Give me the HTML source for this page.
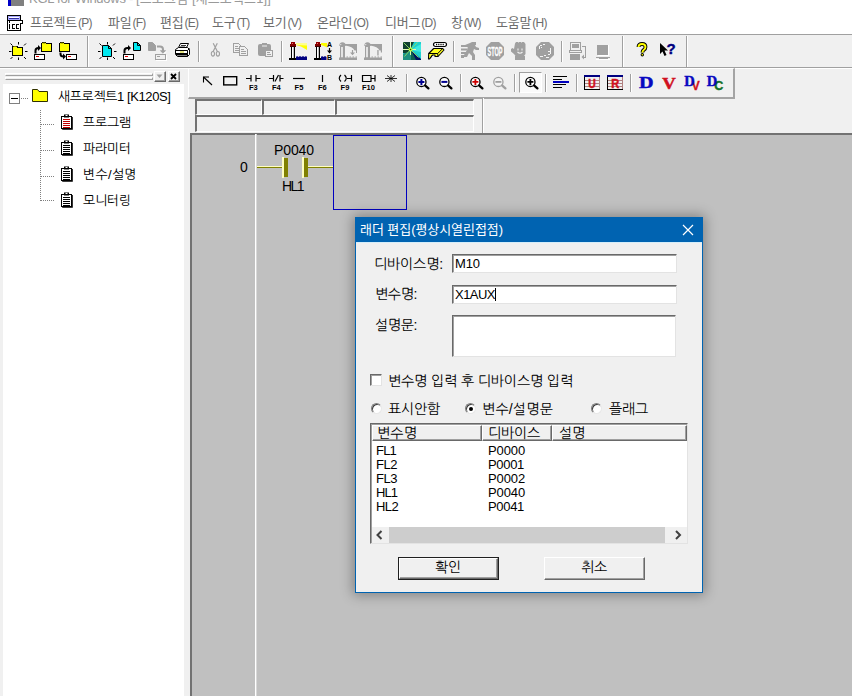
<!DOCTYPE html>
<html lang="ko">
<head>
<meta charset="utf-8">
<title>KGL for Windows</title>
<style>
*{box-sizing:border-box;margin:0;padding:0}
html,body{width:852px;height:696px;overflow:hidden;background:#f0f0f0}
body{font-family:"Liberation Sans","NanumGothic",sans-serif;font-size:12px;color:#000;position:relative}
#app{position:absolute;left:0;top:0;width:852px;height:696px;overflow:hidden;background:#f0f0f0}
.abs{position:absolute}
.t{position:absolute;white-space:nowrap;line-height:14px;height:14px}
svg{position:absolute;overflow:visible}
/* title + menu */
#titlebar{left:0;top:0;width:852px;height:8px;background:#fff;overflow:hidden}
#menubar{left:0;top:8px;width:852px;height:26px;background:#fff}
#menubar .t{color:#6d6d6d;top:6px;font-family:"Liberation Sans","Noto Sans CJK KR",sans-serif;font-size:13px;line-height:18px;height:18px;letter-spacing:-.2px}
#menubar .t span{font-size:12px;letter-spacing:-.75px;margin-left:1px}
#menuline{left:0;top:34px;width:852px;height:1px;background:#a0a0a0}
/* toolbars */
.vsep{position:absolute;width:2px;border-left:1px solid #a0a0a0;border-right:1px solid #fff}
/* left panel */
#leftpanel{left:0;top:69px;width:187px;height:627px;background:#f0f0f0}
#tree{left:0;top:84px;width:184px;height:612px;background:#fff}
/* mdi */
#mdi{left:190px;top:133px;width:662px;height:563px;background:#c0c0c0;border-left:2px solid #727272;border-top:2px solid #727272}
.ib{border-style:solid;border-width:2px 1px 1px 2px;border-color:#727272 #fff #fff #727272;background:#f0f0f0}
.lad{font-size:14px;line-height:16px;height:16px}
/* dialog */
#dlg{left:355px;top:217px;width:348px;height:376px;background:#f0f0f0;border:1px solid #0063b1;box-shadow:0 0 12px 2px rgba(0,0,0,.33)}
#dlgtitle{left:0;top:0;width:346px;height:25px;background:#0063b1;border-bottom:1px solid #d5eefa}
.sunk{position:absolute;background:#fff;border:1px solid;border-color:#696969 #e3e3e3 #e3e3e3 #696969;box-shadow:inset 1px 1px 0 #a0a0a0}
.btn{position:absolute;background:#f0f0f0;border:1px solid;border-color:#fff #696969 #696969 #fff;box-shadow:inset -1px -1px 0 #a0a0a0}
.radio{position:absolute;width:11px;height:11px;margin-top:1px;border-radius:50%;background:#fff;border:1px solid;border-color:#808080 #e8e8e8 #e8e8e8 #808080;box-shadow:inset 1px 1px 0 #404040}
.radio i{position:absolute;left:2.5px;top:2.5px;width:4px;height:4px;border-radius:50%;background:#000}
.hdr{position:absolute;height:16px;background:#f0f0f0;border:1px solid;border-color:#fff #696969 #696969 #fff;box-shadow:inset -1px -1px 0 #a0a0a0}
.k{font-size:14px;line-height:16px;height:16px;margin-top:-1px}
.l{font-size:13px}
.tr{font-size:13px;line-height:16px;height:16px;margin-top:-1px}
.ttl{top:-10px;font-size:13px;line-height:18px;height:18px;color:#9a9a9a;font-family:"Liberation Sans","Noto Sans CJK KR",sans-serif}
</style>
</head>
<body>
<div id="app">
  <div id="titlebar" class="abs">
    <div class="abs" style="left:8px;top:-10px;width:16px;height:16px;background:#808080;border-left:3px solid #0000c8"></div>
    <div class="t ttl" style="left:29px;letter-spacing:-0.27px">KGL for Windows -</div>
    <div class="t ttl" style="left:136px;letter-spacing:0.14px">[프로그램 [새프로젝트1]]</div>
  </div>
  <div id="menubar" class="abs">
    <svg style="left:7px;top:7px" width="16" height="16" viewBox="0 0 16 16" shape-rendering="crispEdges">
      <rect x="0" y="0" width="14" height="16" fill="#000"/>
      <rect x="1" y="1" width="12" height="4" fill="#a8a8ff"/><rect x="2" y="2" width="10" height="1" fill="#fff"/><rect x="2" y="3" width="10" height="1" fill="#3030a0"/>
      <rect x="2" y="5" width="14" height="4" fill="#000"/><rect x="3" y="6" width="12" height="2" fill="#fff"/>
      <rect x="1" y="8" width="12" height="7" fill="#fff"/><rect x="1" y="6" width="1" height="3" fill="#fff"/>
      <path d="M2.500 9v5M5 9.500h3M5.500 9v4M5 13.500h3M9 9.500h3M9.500 9v4M9 13.500h3" stroke="#000" fill="none"/>
    </svg>
    <div class="t m" style="left:30px">프로젝트<span>(P)</span></div>
    <div class="t m" style="left:108px">파일<span>(F)</span></div>
    <div class="t m" style="left:160px">편집<span>(E)</span></div>
    <div class="t m" style="left:212px">도구<span>(T)</span></div>
    <div class="t m" style="left:263px">보기<span>(V)</span></div>
    <div class="t m" style="left:317px">온라인<span>(O)</span></div>
    <div class="t m" style="left:385px">디버그<span>(D)</span></div>
    <div class="t m" style="left:451px">창<span>(W)</span></div>
    <div class="t m" style="left:496px">도움말<span>(H)</span></div>
  </div>
  <div id="menuline" class="abs"></div>
  <div class="abs" id="tb1" style="left:0;top:35px;width:852px;height:32px;background:#f0f0f0"></div>
  <div class="abs" style="left:0;top:67px;width:852px;height:1px;background:#a0a0a0"></div>
  <div class="abs" style="left:0;top:68px;width:852px;height:1px;background:#fff"></div>
  <div class="vsep" style="left:87px;top:36px;height:31px"></div>
  <div class="vsep" style="left:198px;top:41px;height:21px"></div>
  <div class="vsep" style="left:281px;top:41px;height:21px"></div>
  <div class="vsep" style="left:392px;top:36px;height:31px"></div>
  <div class="vsep" style="left:453px;top:41px;height:21px"></div>
  <div class="vsep" style="left:561px;top:41px;height:21px"></div>
  <div class="vsep" style="left:622px;top:36px;height:31px"></div>
  <div class="vsep" style="left:686px;top:36px;height:31px"></div>
  <svg id="tb1ico" style="left:0;top:0" width="852" height="70" viewBox="0 0 852 70">
    <defs>
      <g id="rays" stroke="#000" stroke-width="1" fill="none"><path d="M9.5 0v2.5M9.5 15.5v2.5M0 9.5h2.5M16 9.5h2.5M1.5 1.5l2 2M17 1.5l-2 2M1.5 17l2-2M17 17l-2-2"/></g>
      <g id="folder"><path d="M0.5 9.5v-8l1-1h3l1 1h5v8z" fill="#ff0" stroke="#000" shape-rendering="crispEdges"/><path d="M1.5 1h3" stroke="#808000" /></g>
      <g id="pbox" shape-rendering="crispEdges"><rect x="0.5" y="0.5" width="10" height="5" fill="#fff" stroke="#000"/><rect x="2" y="2" width="3" height="1" fill="#e00000"/></g>
    </defs>
    <!-- 1 new project -->
    <g transform="translate(9,42)"><use href="#rays"/><g transform="translate(3,3.5)"><use href="#folder"/></g></g>
    <!-- 2 open project -->
    <g transform="translate(34,42)"><g transform="translate(7,0)"><use href="#folder"/></g>
      <path d="M1.5 11.5v-3q0-2.5 3-2.5" fill="none" stroke="#000" stroke-width="2"/><path d="M4 3l3 3-3 3z" fill="#000"/>
      <g transform="translate(0,12)"><use href="#pbox"/></g></g>
    <!-- 3 save project -->
    <g transform="translate(59,42)"><use href="#folder"/>
      <path d="M1.5 10.5v1.5q0 2.5 3 2.5" fill="none" stroke="#000" stroke-width="2"/><path d="M4 11.5l3 3-3 3z" fill="#000"/>
      <g transform="translate(7,12)"><use href="#pbox"/></g></g>
    <!-- 4 new file -->
    <g transform="translate(98,42)"><use href="#rays"/><path d="M4.5 3.5h6l3 3v8h-9z" fill="#00e8f0" stroke="#000"/><path d="M10.5 3.5v3h3" fill="none" stroke="#000"/></g>
    <!-- 5 open file -->
    <g transform="translate(123,42)"><path d="M10.5 0.5h4l3 3v5h-7z" fill="#00e8f0" stroke="#000"/><path d="M14.5 0.5v3h3" fill="none" stroke="#000"/>
      <path d="M1.5 11.5v-3q0-2.500 3-2.500h1" fill="none" stroke="#000" stroke-width="2"/><path d="M5 3l3 3-3 3z" fill="#000"/>
      <g transform="translate(0,12)"><use href="#pbox"/></g></g>
    <!-- 6 save file (disabled) -->
    <g transform="translate(148,42)"><path d="M0.500 0.500h4l3 3v5h-7z" fill="#a0a0a0" stroke="#a0a0a0"/>
      <path d="M9 4.500h3q3 0 3 3v2" fill="none" stroke="#a0a0a0" stroke-width="2"/><path d="M12 8.500h6l-3 3z" fill="#a0a0a0"/><path d="M13 9.500h6l-3 3z" fill="#fff" opacity=".8" transform="translate(0,0)"/><path d="M12 8.500h6l-3 3z" fill="#a0a0a0"/>
      <rect x="8.500" y="13.500" width="10" height="5" fill="none" stroke="#fff" shape-rendering="crispEdges"/><rect x="7.500" y="12.500" width="10" height="5" fill="#f0f0f0" stroke="#a0a0a0" shape-rendering="crispEdges"/><rect x="9" y="14" width="3" height="1" fill="#a0a0a0"/></g>
    <!-- 7 printer -->
    <g transform="translate(174,43)"><path d="M4.500 4.500l2-4h8l-2 4" fill="#fff" stroke="#000"/><path d="M7 2.500h5M6 4h5" stroke="#000" stroke-width=".8"/>
      <path d="M1.500 6.500l3-2h9l2 2v5l-2 2h-10l-2-2z" fill="#fff" stroke="#000"/><path d="M1.500 7.500h12l2-2M13.500 7.500v6" fill="none" stroke="#000"/><rect x="2" y="10" width="11" height="2.500" fill="#000"/><rect x="6" y="8.500" width="4" height="1" fill="#c8c800"/></g>
    <!-- 8 cut (disabled) -->
    <g transform="translate(211,43)" fill="none" stroke="#a0a0a0"><path d="M2.200 0.300l4.300 8.500M6.300 0.300l-4.300 8.500" stroke-width="1.200"/><ellipse cx="1.900" cy="10.800" rx="1.600" ry="2.300" stroke-width="1.100"/><ellipse cx="6.900" cy="10.800" rx="1.600" ry="2.300" stroke-width="1.100"/></g>
    <!-- 9 copy (disabled) -->
    <g transform="translate(233,43)" shape-rendering="crispEdges"><path d="M0.500 0.500h5l3 3v6h-8z" fill="#f0f0f0" stroke="#a0a0a0"/><path d="M2 3.500h3M2 5.500h5M2 7.500h5" stroke="#a0a0a0"/>
      <path d="M6.500 3.500h5l3 3v6h-8z" fill="#f0f0f0" stroke="#a0a0a0"/><path d="M8 6.500h3M8 8.500h5M8 10.500h5" stroke="#a0a0a0"/></g>
    <!-- 10 paste (disabled) -->
    <g transform="translate(258,43)"><rect x="0" y="1" width="13" height="12" rx="2" fill="#a0a0a0"/><rect x="4" y="0" width="5" height="2" fill="#a0a0a0"/><rect x="4" y="2.500" width="5" height="1" fill="#f0f0f0"/>
      <rect x="7.500" y="7.500" width="7" height="6" fill="#f0f0f0" stroke="#a0a0a0" shape-rendering="crispEdges"/><path d="M9 9.500h3M9 11.500h4" stroke="#a0a0a0" shape-rendering="crispEdges"/></g>
    <defs>
      <g id="lh" shape-rendering="crispEdges"><rect x="2" y="4" width="4" height="12" fill="#000"/><rect x="3" y="4" width="1" height="12" fill="#fff"/><rect x="4" y="4" width="1" height="12" fill="#c0c0c0"/><rect x="1" y="2" width="6" height="2" fill="#800000"/><rect x="2" y="0" width="4" height="2" fill="#900000"/><rect x="3" y="1" width="1" height="1" fill="#ff6060"/><rect x="1" y="3.500" width="6" height="1" fill="#400000"/><rect x="0" y="16" width="7" height="2" fill="#000"/></g>
      <g id="lhg"><path d="M0.300 4q0-3.700 3.200-3.700t3.200 3.700z" fill="#a0a0a0"/><rect x="1" y="3.500" width="5" height="13" fill="#a0a0a0"/><rect x="2.200" y="5" width="1.600" height="10.500" fill="#f4f4f4"/><circle cx="1.800" cy="2.600" r=".6" fill="#f4f4f4"/>
        <path d="M6 2h12v6.500h-2.500q-1.500-4-9.500-5z" fill="#a0a0a0"/><rect x="0" y="15.500" width="18" height="2.500" fill="#a0a0a0"/><path d="M7.500 14.500h1.500v1h-1.500zM10.500 14.500h1.500v1h-1.500zM13.500 14.500h1.500v1h-1.500zM16.500 14.500h1.500v1h-1.500z" fill="#a0a0a0"/></g>
    </defs>
    <!-- 11 lighthouse find -->
    <g transform="translate(289,42)"><path d="M7 1h11v7l-6-3.500l-5-1.500z" fill="#ff0"/><path d="M7 1h11v2.500l-11-.500z" fill="#ffff90"/><path d="M7 18v-3l1-1 1.500 1 1.500-1 1.500 1 1.500-1 1.500 1 1.500-1 1 1v3z" fill="#000080"/><use href="#lh"/></g>
    <!-- 12 lighthouse replace -->
    <g transform="translate(314,42)"><path d="M7 1h6v4.500l-2-1l-4-1.500z" fill="#ff0"/><path d="M7 18v-3l1-1 1.500 1 1.500-1 1.500 1v3z" fill="#000080"/><use href="#lh"/>
      <text x="13" y="5.300" font-family="Liberation Sans,sans-serif" font-weight="bold" font-size="7" fill="#000">A</text><text x="13" y="18" font-family="Liberation Sans,sans-serif" font-weight="bold" font-size="7" fill="#000">B</text><path d="M15.500 6v4" stroke="#000" stroke-width="1.200"/><path d="M13 8.500h5l-2.500 3z" fill="#000"/></g>
    <!-- 13, 14 lighthouse disabled -->
    <g transform="translate(339,42)"><use href="#lhg"/><path d="M13.500 8v3" stroke="#a0a0a0" stroke-width="1.200"/><path d="M11 10.500h5l-2.500 2.800z" fill="#a0a0a0"/><rect x="17" y="8" width="1" height="3" fill="#a0a0a0"/></g>
    <g transform="translate(364,42)"><use href="#lhg"/><rect x="13.300" y="8" width="1.300" height="5.500" fill="#a0a0a0"/><rect x="16.800" y="8" width="1.200" height="2.500" fill="#a0a0a0"/></g>
    <!-- 15 star -->
    <g transform="translate(402,42)"><rect x="1" y="0" width="18" height="18" fill="#20d0d0"/><path d="M1 0h11l-3.500 7h-7.500zM1 8h7l-2 4-5-1z" fill="#104030"/><path d="M1 12l7-3 2 9h-9z" fill="#209080"/><path d="M9 8l10-6v8z" fill="#40e8e0"/><path d="M9 8l10 9v1h-6z" fill="#001060"/><path d="M9 8l5 10h-5z" fill="#106050"/>
      <path d="M8.500 7.500l-7-7M8.500 7.500l7-7M8.500 7.500l8 8M8.500 7.500l-6 7" stroke="#90e060" stroke-width=".9"/><path d="M8.500 0v13M1 7.500h13" stroke="#e0ffb0" stroke-width="1"/><circle cx="8.500" cy="7.500" r="2" fill="#c0ff40"/><circle cx="8.500" cy="7.500" r=".8" fill="#204000"/></g>
    <!-- 16 connector -->
    <g transform="translate(428,42)"><rect x="5.500" y="0.500" width="13" height="4" rx="2" fill="#fff" stroke="#000" stroke-width="1.200"/><path d="M8 2.500h8.500" stroke="#000" stroke-width="1.300" stroke-dasharray="1.200 1"/>
      <path d="M0.700 11.500l5-5h9l1.300 1.500-6 6.500h-3v-1.500h-2.500l-3 4h-1z" fill="#ffff20" stroke="#000" stroke-linejoin="round" stroke-width="1.100"/><path d="M0.700 11.500h9l5-5M9.700 11.500l.3 3M4.500 13l-2.500 3.500" fill="none" stroke="#000" stroke-width="1"/></g>
    <!-- 17 run (disabled) -->
    <g transform="translate(461,42)" fill="#a0a0a0"><rect x="0" y="3" width="7" height="2"/><rect x="0" y="6.500" width="6" height="2"/><rect x="0" y="10" width="5" height="2"/><rect x="0" y="13" width="3" height="3"/>
      <path d="M11 0h4v3h-1l1 2 3 1v2h-3l-2-1-1 3 2 3v5h-3v-4l-3-3-2 4h-3v-2l3-5 1-4-3 1v-2l5-2z"/></g>
    <!-- 18 stop (disabled) -->
    <g transform="translate(486,42)"><path d="M5 0h8l5 5v8l-5 5h-8l-5-5v-8z" fill="#a0a0a0"/><text x="9" y="13.800" text-anchor="middle" font-family="Liberation Sans,sans-serif" font-weight="bold" font-size="13" fill="#fff" stroke="#fff" stroke-width=".3" textLength="15" lengthAdjust="spacingAndGlyphs">STOP</text></g>
    <!-- 19 hand (disabled) -->
    <g transform="translate(511,42)" fill="#a0a0a0"><path d="M4 1.500l1-1.500h2l.5 1 .5-1h2l.5 1 .5-1h2l1.500 2v10l-1.500 2h-8.500l-1.500-2l-3-2.500v-2.500l1.500-1 1.500 1z"/><rect x="4" y="14" width="10" height="4"/><path d="M7 6.500v2M11 6.500v2M6.500 10q2.500 2.500 5 0" stroke="#f0f0f0" fill="none" stroke-width="1.100"/></g>
    <!-- 20 globe (disabled) -->
    <g transform="translate(536,42)"><path d="M5 0h8l5 5v8l-5 5h-8l-5-5v-8z" fill="#a0a0a0"/><g fill="#f4f4f4" shape-rendering="crispEdges"><rect x="4" y="3" width="2" height="1"/><rect x="3" y="4" width="1" height="3"/><rect x="7" y="2" width="2" height="1"/><rect x="5" y="5" width="1" height="1"/><rect x="14" y="6" width="1" height="6"/><rect x="12" y="9" width="2" height="1"/><rect x="12" y="12" width="2" height="1"/><rect x="4" y="14" width="3" height="1"/><rect x="8" y="13" width="2" height="1"/><rect x="10" y="15" width="3" height="1"/></g></g>
    <!-- 21 pc transfer (disabled) -->
    <g transform="translate(569,42)" shape-rendering="crispEdges"><rect x="1.500" y="0.500" width="10" height="8" fill="#f0f0f0" stroke="#a0a0a0"/><rect x="3" y="2" width="7" height="4" fill="#a0a0a0"/><rect x="0.500" y="8.500" width="12" height="2" fill="#f0f0f0" stroke="#a0a0a0"/><rect x="1" y="12" width="10" height="6" fill="#a0a0a0"/>
      <path d="M13 4.500h3.500v10.500h-3" fill="none" stroke="#a0a0a0"/><path d="M15 12.500v5l-2.500-2.500z" fill="#a0a0a0" shape-rendering="auto"/></g>
    <!-- 22 pc (disabled) -->
    <g transform="translate(596,45)" shape-rendering="crispEdges"><rect x="1" y="0" width="11" height="10" fill="#a0a0a0"/><path d="M12.500 0v10.500h-11" fill="none" stroke="#fff"/><rect x="0" y="11.500" width="14" height="1" fill="#a0a0a0"/><rect x="3" y="12.500" width="9" height="2" fill="#a0a0a0"/><path d="M0 14.500h14" stroke="#fff"/></g>
    <!-- 23 help -->
    <g transform="translate(637,43)"><path d="M1.500 4q0-3 3.500-3t3.500 3q0 2-2 3.200-1 .6-1 2.300" fill="none" stroke="#000" stroke-width="3.800"/><path d="M1.500 4q0-3 3.500-3t3.500 3q0 2-2 3.200-1 .6-1 2.300" fill="none" stroke="#ff0" stroke-width="1.900"/><circle cx="5.300" cy="11.800" r="1.700" fill="#000"/><circle cx="5.300" cy="11.800" r=".8" fill="#ff0"/></g>
    <!-- 24 context help -->
    <g transform="translate(660,43)"><path d="M0 0v11l2.500-2.500l2 4.500l2-1l-2-4.500h3.500z" fill="#000"/><text x="6.500" y="11" font-family="Liberation Sans,sans-serif" font-weight="bold" font-size="15" fill="#000080" stroke="#000080" stroke-width=".4">?</text></g>
  </svg>
  <!-- toolbar 2 -->
  <div class="abs" style="left:188px;top:68px;width:547px;height:31px;background:#f0f0f0;border-style:solid;border-width:1px 2px 2px 1px;border-color:#fff #a4a4a4 #a4a4a4 #fff"></div>
  <div class="vsep" style="left:406px;top:74px;height:18px"></div>
  <div class="vsep" style="left:460px;top:74px;height:18px"></div>
  <div class="vsep" style="left:514px;top:74px;height:18px"></div>
  <div class="vsep" style="left:545px;top:74px;height:18px"></div>
  <div class="vsep" style="left:576px;top:74px;height:18px"></div>
  <div class="vsep" style="left:630px;top:74px;height:18px"></div>
  <div class="abs" style="left:519px;top:72px;width:23px;height:21px;background:#fafafa;border:1px solid;border-color:#a0a0a0 #fff #fff #a0a0a0"></div>
  <svg id="tb2ico" style="left:0;top:0" width="852" height="100" viewBox="0 0 852 100">
    <defs>
      <g id="mag"><circle cx="5.400" cy="4.900" r="4.600" fill="#fff" stroke="#000" stroke-width="1.300"/><path d="M9 8.400l3.400 3" stroke="#000" stroke-width="2.300" stroke-linecap="round"/></g>
      <g id="magg"><circle cx="5.400" cy="4.900" r="4.600" fill="#f4f4f4" stroke="#a0a0a0" stroke-width="1.300"/><path d="M9 8.400l3.400 3" stroke="#a0a0a0" stroke-width="2.300" stroke-linecap="round"/></g>
    </defs>
    <g font-family="Liberation Sans,sans-serif" font-weight="bold" font-size="7.500" fill="#000" text-anchor="middle">
      <!-- arrow -->
      <path d="M203.500 77l8.500 8" stroke="#000" stroke-width="1.100" fill="none"/><path d="M203.500 82.500v-5.500h5.500" stroke="#000" stroke-width="1.100" fill="none"/>
      <!-- rect -->
      <rect x="223.700" y="76.700" width="13" height="8.200" fill="none" stroke="#000" stroke-width="1.400"/>
      <!-- F3 -->
      <path d="M246 78.500h5M256 78.500h4.500M251 75v6.500M256 75v6.500" stroke="#000" stroke-width="1.200" fill="none"/><text x="253.300" y="90">F3</text>
      <!-- F4 -->
      <path d="M269 78.500h4.500M280 78.500h3.500M273.500 75v6.500M280 75v6.500M275 81.500l3.500-6.500" stroke="#000" stroke-width="1.200" fill="none"/><text x="276.300" y="90">F4</text>
      <!-- F5 -->
      <path d="M293 78.500h12" stroke="#000" stroke-width="1.200"/><text x="299" y="90">F5</text>
      <!-- F6 -->
      <path d="M322.500 75v7" stroke="#000" stroke-width="1.200"/><text x="322.300" y="90">F6</text>
      <!-- F9 -->
      <path d="M341 75q-3.500 3.200 0 6.500M344.500 75q3.500 3.200 0 6.500M347 78.500h4.500M351.500 75v6.500" stroke="#000" stroke-width="1.200" fill="none"/><text x="345" y="90">F9</text>
      <!-- F10 -->
      <path d="M362.500 75.500h8.500v6h-8.500zM371 78.500h4M375 75v6.500" stroke="#000" stroke-width="1.200" fill="none"/><text x="368.500" y="90">F10</text>
      <!-- asterisk -->
      <path d="M385 78.500h12M391 75v7M387 75.500l8 6M395 75.500l-8 6" stroke="#000" stroke-width=".800" fill="none"/>
    </g>
    <!-- zoom in -->
    <g transform="translate(416,77)"><use href="#mag"/><path d="M2.400 4.900h6M5.400 1.900v6" stroke="#000090" stroke-width="2"/></g>
    <g transform="translate(439,77)"><use href="#mag"/><path d="M2.400 4.900h6" stroke="#000090" stroke-width="2"/></g>
    <g transform="translate(470,77)"><use href="#mag"/><path d="M2.400 4.900h6M5.400 1.900v6" stroke="#d00000" stroke-width="1.800"/></g>
    <g transform="translate(493,77)"><use href="#magg"/><path d="M2.400 4.900h6" stroke="#a0a0a0" stroke-width="1.800"/></g>
    <g transform="translate(525,77)"><use href="#mag"/><path d="M2.400 4.900h6M5.400 1.900v6" stroke="#000" stroke-width="1.800"/></g>
    <!-- lines -->
    <g shape-rendering="crispEdges"><rect x="553" y="76" width="14" height="1" fill="#000"/><rect x="553" y="79" width="9" height="1" fill="#000"/><rect x="553" y="81" width="16" height="2" fill="#0000c0"/><rect x="553" y="84" width="13" height="1" fill="#000"/><rect x="553" y="87" width="9" height="1" fill="#000"/></g>
    <!-- U / R -->
    <g shape-rendering="crispEdges"><rect x="584" y="75" width="16" height="2" fill="#000080"/><path d="M584.500 77v12.500h15v-12.500M584 80.500h16M584 83.500h16M584 86.500h16" fill="none" stroke="#b08080"/><path d="M584.500 77v12.500h15.500" fill="none" stroke="#000"/>
      <rect x="607" y="75" width="16" height="2" fill="#000080"/><path d="M607.500 77v12.500h15v-12.500M607 80.500h16M607 83.500h16M607 86.500h16" fill="none" stroke="#b08080"/><path d="M607.500 77v12.500h15.500" fill="none" stroke="#000"/></g>
    <g font-family="Liberation Sans,sans-serif" font-weight="bold" text-anchor="middle">
      <text x="592" y="87.700" font-size="12" fill="#d01020" stroke="#d01020" stroke-width=".5" textLength="7.500" lengthAdjust="spacingAndGlyphs">U</text>
      <text x="615.200" y="87.700" font-size="12" fill="#d01020" stroke="#d01020" stroke-width=".5" textLength="8" lengthAdjust="spacingAndGlyphs">R</text>
      <text x="718.800" y="89.600" font-size="12.500" fill="#107028" stroke="#107028" stroke-width=".4">C</text>
      <text x="695.700" y="89.600" font-size="12" fill="#d01020" stroke="#d01020" stroke-width=".3">V</text>
    </g>
    <g font-family="Liberation Serif,serif" font-weight="bold" text-anchor="middle">
      <text x="646.200" y="87.700" font-size="16.500" fill="#0808c0" stroke="#0808c0" stroke-width=".5" textLength="14.500" lengthAdjust="spacingAndGlyphs">D</text>
      <text x="669" y="88.500" font-size="17" fill="#d01020" stroke="#d01020" stroke-width=".5" textLength="13.500" lengthAdjust="spacingAndGlyphs">V</text>
      <text x="689.500" y="85.800" font-size="14.500" fill="#0808c0" stroke="#0808c0" stroke-width=".4">D</text>
      <text x="712" y="85.800" font-size="14.500" fill="#0808c0" stroke="#0808c0" stroke-width=".4">D</text>
    </g>
  </svg>
  <!-- left docking panel -->
  <div id="leftpanel" class="abs"></div>
  <div class="abs" style="left:5px;top:73px;width:148px;height:3px;border:1px solid;border-color:#fff #a0a0a0 #a0a0a0 #fff;background:#f0f0f0"></div>
  <div class="abs" style="left:5px;top:77px;width:148px;height:3px;border:1px solid;border-color:#fff #a0a0a0 #a0a0a0 #fff;background:#f0f0f0"></div>
  <div class="abs" style="left:154px;top:71px;width:12px;height:11px;background:#f0f0f0;border:1px solid;border-color:#fff #696969 #696969 #fff;box-shadow:inset -1px -1px 0 #a0a0a0"></div>
  <div class="abs" style="left:168px;top:71px;width:12px;height:11px;background:#f0f0f0;border:1px solid;border-color:#fff #696969 #696969 #fff;box-shadow:inset -1px -1px 0 #a0a0a0"></div>
  <div id="tree" class="abs" style="left:3px;width:181px"></div>
  <svg style="left:0;top:0" width="190" height="230" viewBox="0 0 190 230">
    <path d="M156.500 74.500h6l-3 3.500z" fill="#a0a0a0"/>
    <path d="M171 74l5 5M176 74l-5 5" stroke="#000" stroke-width="1.800"/>
    <rect x="9.500" y="93.500" width="10" height="10" fill="#fff" stroke="#808080" shape-rendering="crispEdges"/>
    <rect x="11" y="98" width="7" height="1" fill="#000" shape-rendering="crispEdges"/>
    <g stroke="#808080" stroke-dasharray="1 1" shape-rendering="crispEdges" fill="none">
      <path d="M21 98.500h8"/><path d="M40.500 110v90.500"/><path d="M41 124.500h14"/><path d="M41 150.500h14"/><path d="M41 176.500h14"/><path d="M41 200.500h14"/>
    </g>
    <path d="M32.500 101.500v-12h5l1.500 2h8.500v10z" fill="#ff0" stroke="#303000" stroke-linejoin="round"/>
    <defs>
      <g id="clipb"><rect x="1.500" y="2.500" width="10" height="12" fill="#fff" stroke="#000" stroke-width="1"/><path d="M12.200 3v12.200h-10" fill="none" stroke="#000" stroke-width="1.200"/><rect x="4" y="0.500" width="5" height="3" fill="#000"/><rect x="5.500" y="1" width="2" height="1" fill="#fff"/></g>
      <g id="clines" shape-rendering="crispEdges"><rect x="3" y="5" width="7" height="1"/><rect x="3" y="7" width="7" height="1"/><rect x="3" y="9" width="7" height="1"/><rect x="3" y="11" width="7" height="1"/><rect x="3" y="13" width="7" height="1"/></g>
    </defs>
    <g transform="translate(60,114)"><use href="#clipb"/><use href="#clines" fill="#c00000"/></g>
    <g transform="translate(60,140)"><use href="#clipb"/><use href="#clines" fill="#000"/></g>
    <g transform="translate(60,166)"><use href="#clipb"/><use href="#clines" fill="#000"/></g>
    <g transform="translate(60,192)"><use href="#clipb"/><use href="#clines" fill="#000"/></g>
  </svg>
  <div class="t tr" style="left:58px;top:90px;letter-spacing:-0.41px">새프로젝트1 [K120S]</div>
  <div class="t tr" style="left:83px;top:116px;letter-spacing:-0.22px">프로그램</div>
  <div class="t tr" style="left:83px;top:142px;letter-spacing:-0.22px">파라미터</div>
  <div class="t tr" style="left:83px;top:168px;letter-spacing:0.30px">변수/설명</div>
  <div class="t tr" style="left:83px;top:194px;letter-spacing:-0.22px">모니터링</div>
  <!-- info bar -->
  <div class="abs" style="left:482px;top:98px;width:1px;height:35px;background:#a0a0a0"></div>
  <div class="abs" style="left:483px;top:98px;width:1px;height:35px;background:#fff"></div>
  <div class="abs ib" style="left:195px;top:99px;width:67px;height:16px"></div>
  <div class="abs ib" style="left:262px;top:99px;width:73px;height:16px"></div>
  <div class="abs ib" style="left:335px;top:99px;width:139px;height:16px"></div>
  <div class="abs ib" style="left:195px;top:115px;width:279px;height:17px"></div>
  <!-- mdi client / ladder -->
  <div id="mdi" class="abs"></div>
  <div class="abs" style="left:255px;top:134px;width:1px;height:562px;background:#fff"></div>
  <div class="abs" style="left:256px;top:134px;width:1px;height:562px;background:#d8d8d8"></div>
  <div class="abs" style="left:333px;top:135px;width:74px;height:75px;border:1px solid #0000c0"></div>
  <svg style="left:0;top:0" width="420" height="220" viewBox="0 0 420 220" shape-rendering="crispEdges">
    <rect x="257" y="166" width="25" height="1" fill="#ffffc0"/><rect x="257" y="167" width="25" height="1" fill="#808000"/>
    <rect x="308" y="166" width="25" height="1" fill="#ffffc0"/><rect x="308" y="167" width="25" height="1" fill="#808000"/>
    <rect x="282" y="157" width="2" height="21" fill="#ffffc0"/><rect x="284" y="158" width="4" height="19" fill="#808000"/>
    <rect x="302" y="157" width="2" height="21" fill="#ffffc0"/><rect x="304" y="158" width="4" height="19" fill="#808000"/>
  </svg>
  <div class="t lad" style="left:240px;top:159px">0</div>
  <div class="t lad" style="left:274px;top:142px;letter-spacing:-0.10px">P0040</div>
  <div class="t lad" style="left:282px;top:178px;letter-spacing:-1.56px">HL1</div>
  <!-- dialog -->
  <div id="dlg" class="abs">
    <div id="dlgtitle" class="abs"></div>
    <div class="t" style="left:4px;top:3px;color:#fff;font-family:'Liberation Sans','Noto Sans CJK KR',sans-serif;font-size:13px;line-height:18px;height:18px;letter-spacing:-0.06px">래더 편집(평상시열린접점)</div>
    <svg style="left:325.500px;top:6px" width="12" height="12" viewBox="0 0 12 12"><path d="M1 1l10 10M11 1l-10 10" stroke="#fff" stroke-width="1.200"/></svg>
    <div class="t k" style="left:18px;top:39px;letter-spacing:-0.12px">디바이스명:</div>
    <div class="t k" style="left:19px;top:69px;letter-spacing:-0.34px">변수명:</div>
    <div class="t k" style="left:19px;top:100px;letter-spacing:-0.34px">설명문:</div>
    <div class="sunk" style="left:96px;top:36px;width:225px;height:19px"></div>
    <div class="sunk" style="left:96px;top:67px;width:225px;height:19px"></div>
    <div class="sunk" style="left:96px;top:97px;width:224px;height:42px"></div>
    <div class="t l" style="left:99px;top:39px;letter-spacing:-0.10px">M10</div>
    <div class="t l" style="left:99px;top:70px;letter-spacing:-0.53px">X1AUX</div>
    <div class="abs" style="left:139px;top:70px;width:1px;height:13px;background:#000"></div>
    <div class="sunk" style="left:14px;top:156px;width:12px;height:12px"></div>
    <div class="t k" style="left:32px;top:156px;letter-spacing:-0.10px">변수명 입력 후 디바이스명 입력</div>
    <div class="radio" style="left:15px;top:184px"></div>
    <div class="t k" style="left:32px;top:184px;letter-spacing:-0.16px">표시안함</div>
    <div class="radio" style="left:109px;top:184px"><i></i></div>
    <div class="t k" style="left:126px;top:184px;letter-spacing:0.22px">변수/설명문</div>
    <div class="radio" style="left:235px;top:184px"></div>
    <div class="t k" style="left:253px;top:184px;letter-spacing:-0.16px">플래그</div>
    <!-- list -->
    <div class="sunk" style="left:14px;top:205px;width:318px;height:121px"></div>
    <div class="hdr" style="left:16px;top:207px;width:110px"></div>
    <div class="hdr" style="left:126px;top:207px;width:70px"></div>
    <div class="hdr" style="left:196px;top:207px;width:135px"></div>
    <div class="t k" style="left:21px;top:208px;letter-spacing:0.17px">변수명</div>
    <div class="t k" style="left:132px;top:208px;letter-spacing:-0.16px">디바이스</div>
    <div class="t k" style="left:203px;top:208px;letter-spacing:-0.16px">설명</div>
    <div class="t l" style="left:20px;top:226px;letter-spacing:-0.80px">FL1</div><div class="t l" style="left:132px;top:226px;letter-spacing:-0.12px">P0000</div>
    <div class="t l" style="left:20px;top:240px;letter-spacing:-0.47px">FL2</div><div class="t l" style="left:132px;top:240px;letter-spacing:-0.32px">P0001</div>
    <div class="t l" style="left:20px;top:254px;letter-spacing:-0.47px">FL3</div><div class="t l" style="left:132px;top:254px;letter-spacing:-0.12px">P0002</div>
    <div class="t l" style="left:20px;top:268px;letter-spacing:-0.95px">HL1</div><div class="t l" style="left:132px;top:268px;letter-spacing:-0.12px">P0040</div>
    <div class="t l" style="left:20px;top:282px;letter-spacing:-0.62px">HL2</div><div class="t l" style="left:132px;top:282px;letter-spacing:-0.32px">P0041</div>
    <div class="abs" style="left:16px;top:309px;width:315px;height:16px;background:#f0f0f0"></div>
    <div class="abs" style="left:33px;top:309px;width:276px;height:16px;background:#cdcdcd"></div>
    <svg style="left:16px;top:309px" width="315" height="16" viewBox="0 0 315 16"><path d="M9.500 4l-4 4 4 4" fill="none" stroke="#404040" stroke-width="2"/><path d="M304 4l4 4-4 4" fill="none" stroke="#404040" stroke-width="2"/></svg>
    <!-- buttons -->
    <div class="abs" style="left:42px;top:339px;width:101px;height:23px;background:#202020"></div>
    <div class="btn" style="left:43px;top:340px;width:99px;height:21px"></div>
    <div class="btn" style="left:188px;top:339px;width:101px;height:23px"></div>
    <div class="t k" style="left:79px;top:342px;letter-spacing:-0.16px">확인</div>
    <div class="t k" style="left:225px;top:342px;letter-spacing:-0.16px">취소</div>
  </div>
</div>
</body>
</html>
